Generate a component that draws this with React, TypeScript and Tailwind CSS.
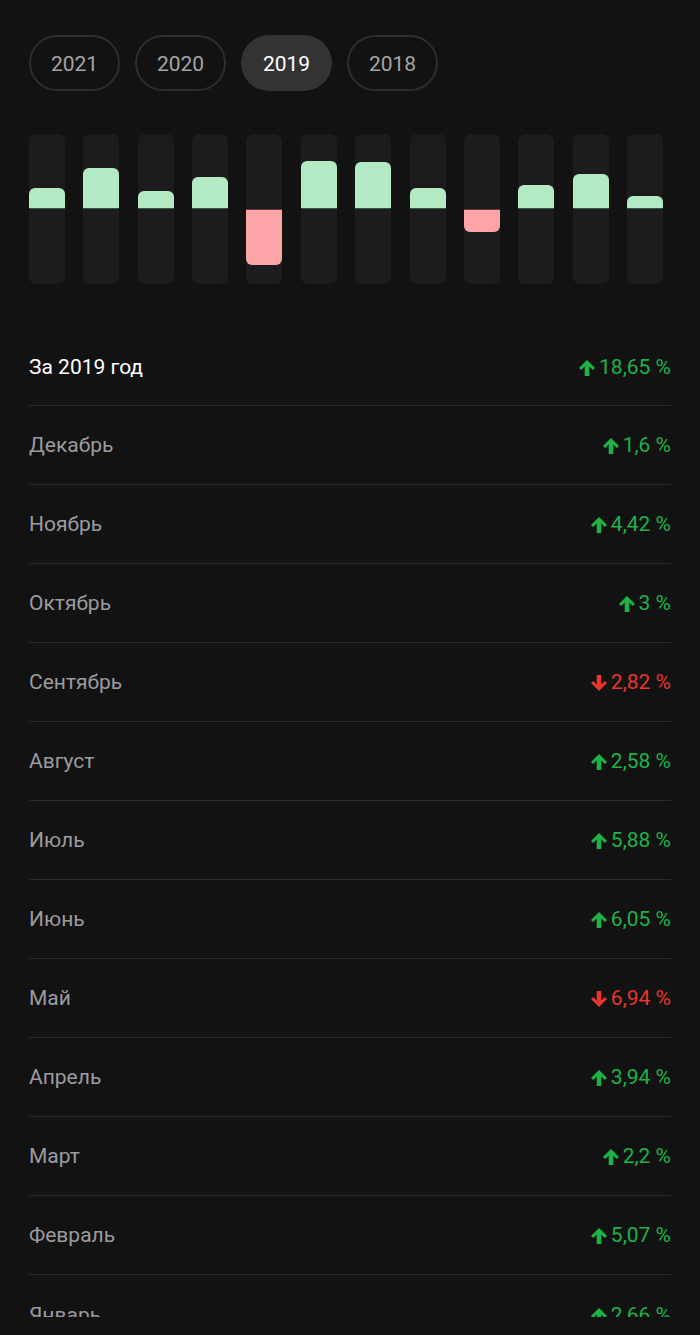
const years = ["2021", "2020", "2019", "2018"];

// month data, newest first (as in the list)
const months: { name: string; value: number }[] = [
  { name: "Декабрь", value: 1.6 },
  { name: "Ноябрь", value: 4.42 },
  { name: "Октябрь", value: 3 },
  { name: "Сентябрь", value: -2.82 },
  { name: "Август", value: 2.58 },
  { name: "Июль", value: 5.88 },
  { name: "Июнь", value: 6.05 },
  { name: "Май", value: -6.94 },
  { name: "Апрель", value: 3.94 },
  { name: "Март", value: 2.2 },
  { name: "Февраль", value: 5.07 },
  { name: "Январь", value: 2.66 },
];

const fmt = (v: number) => Math.abs(v).toString().replace(".", ",") + " %";

const Arrow = ({ up }: { up: boolean }) => (
  <svg
    viewBox="0 0 16 16"
    className={"size-[16px] " + (up ? "" : "rotate-180")}
    fill="currentColor"
  >
    <path d="M8 0 16 8 13.9 10.1 10.3 6.5V16H5.7V6.5L2.1 10.1 0 8Z" />
  </svg>
);

const Change = ({ value }: { value: number }) => {
  const up = value >= 0;
  return (
    <div
      className={
        "flex items-center gap-[4px] " +
        (up ? "text-[#1db347]" : "text-[#e8352f]")
      }
    >
      <Arrow up={up} />
      <span>{fmt(value)}</span>
    </div>
  );
};

export default function App() {
  const chart = [...months].reverse();

  return (
    <div
      className="h-[1335px] bg-[#121212] text-[21px]"
      style={{ fontFamily: "Roboto, 'Noto Sans', sans-serif" }}
    >
      <div className="h-[1317px] overflow-hidden px-[29px] pt-[35px]">
        {/* Years */}
        <div className="flex gap-[15px]">
          {years.map((y) => (
            <div
              key={y}
              className={
                "flex h-[56px] w-[91px] items-center justify-center rounded-full pt-[3px] " +
                (y === "2019"
                  ? "bg-[#333333] text-white"
                  : "border-2 border-[#2e2e2e] text-[#a3a3a6]")
              }
            >
              {y}
            </div>
          ))}
        </div>

        {/* Chart */}
        <div className="mt-[43px] flex justify-between pr-[8px]">
          {chart.map((m) => (
            <div
              key={m.name}
              className="flex h-[150px] w-[36px] flex-col overflow-hidden rounded-[7px] bg-[#1c1c1e]"
            >
              <div className="flex flex-1 flex-col justify-end">
                {m.value > 0 && (
                  <div
                    className="rounded-t-[6px] border-b border-[#2d5a3a] bg-[#b3eac4]"
                    style={{ height: Math.round(m.value * 8) }}
                  />
                )}
              </div>
              <div className="flex-1">
                {m.value < 0 && (
                  <div
                    className="rounded-b-[6px] border-t border-[#6a3536] bg-[#fda4a6]"
                    style={{ height: Math.round(-m.value * 8) }}
                  />
                )}
              </div>
            </div>
          ))}
        </div>

        {/* List */}
        <div className="mt-[44px] flex flex-col">
          <div className="flex h-[78px] items-center justify-between border-b border-[#2a2a2a] pt-[2px]">
            <span className="text-white">За 2019 год</span>
            <Change value={18.65} />
          </div>
          {months.map((m, i) => (
            <div
              key={m.name}
              className={
                "flex h-[79px] items-center justify-between pt-[2px] " +
                (i < months.length - 1 ? "border-b border-[#2a2a2a]" : "")
              }
            >
              <span className="text-[#9b9ba0]">{m.name}</span>
              <Change value={m.value} />
            </div>
          ))}
        </div>
      </div>
    </div>
  );
}
